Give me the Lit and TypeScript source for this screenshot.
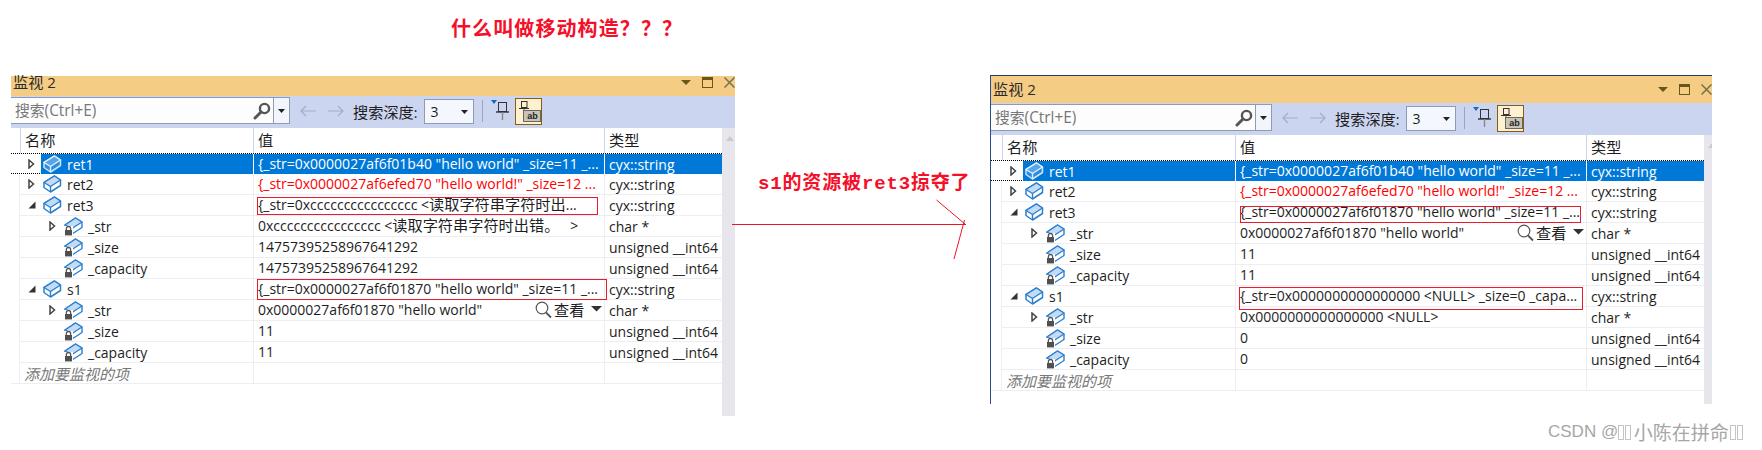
import { LitElement, html, css, svg } from "lit";
import { customElement, property } from "lit/decorators.js";

type Box = { left: number; top: number; width: number; height: number };
type Row = {
  name: string;
  level: number;
  exp?: "open" | "closed";
  value: unknown;
  type: string;
  sel?: boolean;
  red?: boolean;
  box?: Box;
  view?: boolean;
};

const boxIcon = (sel: boolean) => svg`
  <path d="M1 7.5 L11.5 1 L17.5 5 V10.5 L7.5 17 L1 12.5 Z" fill="${sel ? "#2b8be0" : "#fff"}" stroke="${sel ? "#cfe4f8" : "#2a7fd0"}" stroke-width="1.5" stroke-linejoin="round"/>
  <path d="M1 7.5 L11.5 1 L17.5 5 L7.5 11.5 Z" fill="${sel ? "#5aa5e8" : "#c3dbf4"}" stroke="${sel ? "#e4f0fb" : "#2a7fd0"}" stroke-width="1.4" stroke-linejoin="round"/>
  <path d="M7.5 11.5 V17" stroke="${sel ? "#e4f0fb" : "#2a7fd0"}" stroke-width="1.4"/>
`;

const objectIcon = (sel: boolean) => html`<svg class="ico" width="19" height="18" viewBox="0 0 19 18">${boxIcon(sel)}</svg>`;

const memberIcon = html`<svg class="ico" width="19" height="19" viewBox="0 0 19 19">
  <path d="M1 8 L11.5 1 L18 5 V10.5 L8 17 L1 13 Z" fill="#fff" stroke="#2a7fd0" stroke-width="1.4" stroke-linejoin="round"/>
  <path d="M1 8 L11.5 1 L18 5 L8 11.5 Z" fill="#c3dbf4" stroke="#2a7fd0" stroke-width="1.3" stroke-linejoin="round"/>
  <rect x="0" y="9" width="9" height="10" fill="#fff"/>
  <path d="M2.4 13 V11.6 A2.1 2.1 0 0 1 6.6 11.6 V13" fill="none" stroke="#555" stroke-width="1.3"/>
  <rect x="1" y="13" width="7" height="5.4" fill="#505050"/>
</svg>`;

const closedArrow = html`<svg class="arrow" width="7" height="10" viewBox="0 0 7 10"><path d="M1 1 L5.5 5 L1 9 Z" fill="#fff" stroke="#444" stroke-width="1.5"/></svg>`;
const openArrow = html`<svg class="arrow" width="8" height="8" viewBox="0 0 8 8"><path d="M0.5 7.5 H7.5 V0.5 Z" fill="#333"/></svg>`;

const viewer = html`<span class="viewer">
  <svg width="17" height="18" viewBox="0 0 17 18"><circle cx="7" cy="7" r="5.8" fill="#fff" stroke="#555" stroke-width="1.2"/><path d="M11 11.5 L16 16.5" stroke="#555" stroke-width="1.8"/></svg>
  <span class="cjk">查看</span>
  <svg class="vdown" width="11" height="6" viewBox="0 0 11 6"><path d="M0 0 H11 L5.5 5.5 Z" fill="#333"/></svg>
</span>`;

@customElement("watch-panel")
class WatchPanel extends LitElement {
  @property({ type: Array }) rows: Row[] = [];
  @property({ type: Number }) searchWidth = 279;
  @property({ type: Number }) gutter = 9;
  @property({ type: Number }) titleHeight = 20;
  @property({ type: Number }) scrollWidth2 = 13;
  @property({ type: Boolean, reflect: true }) framed = false;

  static styles = css`
    :host {
      display: flex;
      flex-direction: column;
      box-sizing: border-box;
      color: #1e1e1e;
      font: 14px "Open Sans", "Noto Sans CJK SC", sans-serif;
    }
    :host([framed]) {
      border-top: 1px solid #1f3a78;
      border-left: 1px solid #2b4a94;
      overflow: hidden;
    }
    .cjk { font-size: 15.2px; font-family: "Noto Sans CJK SC", sans-serif; line-height: 1; }
    .title {
      flex: none;
      display: flex;
      align-items: flex-end;
      background: #f5cc84;
      box-sizing: border-box;
      padding: 0 0 6px 2px;
      font-size: 15px;
      line-height: 15px;
      color: #2b2b2b;
    }
    .title-icons {
      margin-left: auto;
      display: flex;
      align-items: center;
      flex: none;
      width: 54px;
      gap: 11px;
      height: 12px;
      margin-bottom: 2px;
    }
    .toolbar {
      flex: none;
      height: 32px;
      display: flex;
      background: #ccd5f0;
      align-items: flex-start;
    }
    .search {
      flex: none;
      box-sizing: border-box;
      height: 27px;
      margin-top: 1px;
      background: #fdfdfe;
      border-top: 1px solid #8f9ab3;
      border-bottom: 1px solid #8f9ab3;
      border-right: 1px solid #8f9ab3;
      display: flex;
      align-items: center;
      color: #777;
      padding-left: 4px;
    }
    .search .q { flex: 1; display: flex; align-items: center; font-size: 15.4px; }
    .search svg.glass { margin-right: 2px; }
    .search .drop {
      width: 15px;
      align-self: stretch;
      border-left: 1px solid #8f9ab3;
      background: #f3f5fc;
      display: flex;
      align-items: center;
      justify-content: center;
    }
    .nav { display: flex; gap: 12px; margin: 9px 0 0 10px; }
    .depth { margin: 6px 0 0 9px; color: #1e1e1e; display: flex; align-items: center; height: 20px; }
    .combo {
      box-sizing: border-box;
      width: 50px;
      height: 25px;
      margin: 3px 0 0 7px;
      background: #f5f7fe;
      border: 1px solid #8f9ab3;
      display: flex;
      align-items: center;
      justify-content: space-between;
      padding: 0 5px 0 5px;
      font-size: 14px;
      color: #1e1e1e;
    }
    .sep { width: 1px; height: 22px; background: #9aa6bf; margin: 4px 0 0 8px; }
    .pin { margin: 4px 0 0 8px; }
    .toggle {
      box-sizing: border-box;
      width: 27px;
      height: 27px;
      margin: 2px 0 0 5px;
      background: #fff0d0;
      border: 1px solid #8a5c10;
      position: relative;
    }
    .toggle .ab {
      position: absolute;
      left: 7px;
      top: 11px;
      width: 18px;
      height: 12px;
      box-sizing: border-box;
      background: #c8c4b8;
      border: 1px solid #666;
      font: bold 9px/10px "Liberation Sans", sans-serif;
      text-align: center;
      color: #222;
    }
    .toggle svg { position: absolute; left: 2px; top: 0; }
    .body { flex: 1; display: flex; min-height: 0; background: #fff; }
    .list { flex: 1; min-width: 0; }
    .scroll { flex: none; background: #e6e6ec; position: relative; }
    .scroll svg { position: absolute; left: 4px; top: 8px; }
    .grid {
      display: grid;
      grid-template-columns: var(--g) 233px 351px 1fr;
      box-sizing: border-box;
    }
    .head { height: 25px; }
    .head > div { display: flex; align-items: center; padding: 0 0 2px 4px; box-sizing: border-box; }
    .head .col { border-left: 1px solid #ccd5f0; }
    .head > div.g { padding: 0; }
    .row { height: 21px; }
    .row > div {
      box-sizing: border-box;
      border-bottom: 1px solid #eeeef2;
      display: flex;
      align-items: center;
      white-space: nowrap;
      min-width: 0;
    }
    .row > div.g { border-bottom-color: transparent; }
    .row.last > div.g { border-bottom-color: #eeeef2; }
    .row .name { border-left: 1px solid #eeeef2; margin-left: -1px; }
    .row .value, .row .type { border-left: 1px solid #eeeef2; padding-left: 4px; }
    .row .value { position: relative; }
    .txt { flex: 1; white-space: pre; line-height: 20px; }
    .exp { flex: none; width: 21px; display: flex; justify-content: flex-start; padding-left: 8px; box-sizing: border-box; }
    .label { flex: 1; align-self: stretch; display: flex; align-items: center; padding-left: 2px; gap: 5px; }
    .ico { flex: none; }
    .row.sel { border-top: 1px dotted #000; border-bottom: 1px dotted #000; }
    .row.sel > div { border-bottom: 0; }
    .row.sel .name { border-left-color: transparent; }
    .row.sel .label, .row.sel .value, .row.sel .type { background: #0078d7; color: #fff; }
    .row.sel .value, .row.sel .type { border-left-color: #fff; }
    .red { color: #f00; }
    .add { color: #777; font-style: italic; padding-left: 4px; font-size: 15px; }
    .viewer { position: absolute; left: 281px; top: 0; height: 20px; display: flex; align-items: center; background: #fff; }
    .viewer .cjk { margin-left: 2px; }
    .vdown { margin-left: 7px; margin-top: -3px; }
    .redbox { position: absolute; box-sizing: border-box; border: 1px solid #e81c2c; pointer-events: none; }
  `;

  private renderRow(r: Row) {
    const ind = r.level * 21;
    return html`<div class="grid row ${r.sel ? "sel" : ""}">
      <div class="g"></div>
      <div class="name">
        <span style="flex:none;width:${ind}px"></span>
        <span class="exp">${r.exp === "open" ? openArrow : r.exp === "closed" ? closedArrow : ""}</span>
        <span class="label">${r.level === 0 ? objectIcon(!!r.sel) : memberIcon}<span>${r.name}</span></span>
      </div>
      <div class="value">
        <span class="txt ${r.red ? "red" : ""}">${r.value}</span>
        ${r.view ? viewer : ""}
        ${r.box
          ? html`<span class="redbox" style="left:${r.box.left}px;top:${r.box.top}px;width:${r.box.width}px;height:${r.box.height}px"></span>`
          : ""}
      </div>
      <div class="type">${r.type}</div>
    </div>`;
  }

  render() {
    return html`
      <div class="title" style="height:${this.titleHeight}px">
        <span><span class="cjk">监视</span> 2</span>
        <span class="title-icons">
          <svg width="10" height="5" viewBox="0 0 10 5"><path d="M0 0 H10 L5 5 Z" fill="#6b5518"/></svg>
          <svg width="11" height="11" viewBox="0 0 11 11"><rect x="0.5" y="0.5" width="10" height="10" fill="none" stroke="#6b5518"/><rect x="0" y="0" width="11" height="3" fill="#6b5518"/></svg>
          <svg width="11" height="11" viewBox="0 0 11 11"><path d="M0.5 0.5 L10.5 10.5 M10.5 0.5 L0.5 10.5" stroke="#75704f" stroke-width="1.5"/></svg>
        </span>
      </div>
      <div class="toolbar">
        <div class="search" style="width:${this.searchWidth}px">
          <span class="q"><span class="cjk" style="font-size:14.8px">搜索</span>(Ctrl+E)</span>
          <svg class="glass" width="18" height="18" viewBox="0 0 18 18"><circle cx="11.5" cy="6.5" r="4.6" fill="none" stroke="#555" stroke-width="2.4"/><path d="M8 10 L2 16" stroke="#555" stroke-width="3" stroke-linecap="round"/></svg>
          <span class="drop"><svg width="7" height="4" viewBox="0 0 7 4"><path d="M0 0 H7 L3.5 4 Z" fill="#222"/></svg></span>
        </div>
        <div class="nav">
          <svg width="16" height="12" viewBox="0 0 16 12"><path d="M16 6 H1 M6 1 L1 6 L6 11" fill="none" stroke="#a4adc6" stroke-width="1.2"/></svg>
          <svg width="16" height="12" viewBox="0 0 16 12"><path d="M0 6 H15 M10 1 L15 6 L10 11" fill="none" stroke="#a4adc6" stroke-width="1.2"/></svg>
        </div>
        <div class="depth"><span class="cjk">搜索深度</span>:</div>
        <div class="combo"><span>3</span><svg width="7" height="4" viewBox="0 0 7 4"><path d="M0 0 H7 L3.5 4 Z" fill="#222"/></svg></div>
        <div class="sep"></div>
        <svg class="pin" width="19" height="21" viewBox="0 0 19 21">
          <path d="M0 0 H6 L3 4 Z" fill="#1c6ab0"/>
          <rect x="7.5" y="2.5" width="8" height="9" fill="none" stroke="#333"/>
          <path d="M5 12 H18" stroke="#333" stroke-width="1.4"/>
          <path d="M11.5 12 V20" stroke="#888" stroke-width="1.4"/>
        </svg>
        <div class="toggle">
          <svg width="12" height="18" viewBox="0 0 12 18"><rect x="3.5" y="2.5" width="5.5" height="6" fill="none" stroke="#333"/><path d="M1 9.5 H11" stroke="#333"/><path d="M6 10 V16" stroke="#666"/></svg>
          <span class="ab">ab</span>
        </div>
      </div>
      <div class="body" style="--g:${this.gutter}px">
        <div class="list">
          <div class="grid head">
            <div class="g"></div>
            <div class="col"><span class="cjk">名称</span></div>
            <div class="col"><span class="cjk">值</span></div>
            <div class="col"><span class="cjk">类型</span></div>
          </div>
          ${this.rows.map((r) => this.renderRow(r))}
          <div class="grid row last">
            <div class="g"></div>
            <div class="name"><span class="add cjk">添加要监视的项</span></div>
            <div class="value"></div>
            <div class="type"></div>
          </div>
        </div>
        <div class="scroll" style="width:${this.scrollWidth2}px">
          <svg width="8" height="5" viewBox="0 0 8 5"><path d="M0 5 L4 0 L8 5 Z" fill="#c9c9d0"/></svg>
        </div>
      </div>
    `;
  }
}

const cjk = (s: string) => html`<span class="cjk">${s}</span>`;

const leftRows: Row[] = [
  { name: "ret1", level: 0, exp: "closed", sel: true, type: "cyx::string", value: `{_str=0x0000027af6f01b40 "hello world" _size=11 _...` },
  { name: "ret2", level: 0, exp: "closed", red: true, type: "cyx::string", value: `{_str=0x0000027af6efed70 "hello world!" _size=12 ...` },
  { name: "ret3", level: 0, exp: "open", type: "cyx::string", value: html`{_str=0xcccccccccccccccc &lt;${cjk("读取字符串字符时出")}...`, box: { left: 3, top: 2, width: 341, height: 18 } },
  { name: "_str", level: 1, exp: "closed", type: "char *", value: html`0xcccccccccccccccc &lt;${cjk("读取字符串字符时出错。")}   &gt;` },
  { name: "_size", level: 1, type: "unsigned __int64", value: "14757395258967641292" },
  { name: "_capacity", level: 1, type: "unsigned __int64", value: "14757395258967641292" },
  { name: "s1", level: 0, exp: "open", type: "cyx::string", value: `{_str=0x0000027af6f01870 "hello world" _size=11 _...`, box: { left: 3, top: 0, width: 350, height: 21 } },
  { name: "_str", level: 1, exp: "closed", type: "char *", value: `0x0000027af6f01870 "hello world"`, view: true },
  { name: "_size", level: 1, type: "unsigned __int64", value: "11" },
  { name: "_capacity", level: 1, type: "unsigned __int64", value: "11" },
];

const rightRows: Row[] = [
  { name: "ret1", level: 0, exp: "closed", sel: true, type: "cyx::string", value: `{_str=0x0000027af6f01b40 "hello world" _size=11 _...` },
  { name: "ret2", level: 0, exp: "closed", red: true, type: "cyx::string", value: `{_str=0x0000027af6efed70 "hello world!" _size=12 ...` },
  { name: "ret3", level: 0, exp: "open", type: "cyx::string", value: `{_str=0x0000027af6f01870 "hello world" _size=11 _...`, box: { left: 4, top: 4, width: 341, height: 17 } },
  { name: "_str", level: 1, exp: "closed", type: "char *", value: `0x0000027af6f01870 "hello world"`, view: true },
  { name: "_size", level: 1, type: "unsigned __int64", value: "11" },
  { name: "_capacity", level: 1, type: "unsigned __int64", value: "11" },
  { name: "s1", level: 0, exp: "open", type: "cyx::string", value: `{_str=0x0000000000000000 <NULL> _size=0 _capa...`, box: { left: 3, top: 1, width: 344, height: 23 } },
  { name: "_str", level: 1, exp: "closed", type: "char *", value: `0x0000000000000000 <NULL>` },
  { name: "_size", level: 1, type: "unsigned __int64", value: "0" },
  { name: "_capacity", level: 1, type: "unsigned __int64", value: "0" },
];

@customElement("app-root")
class AppRoot extends LitElement {
  static styles = css`
    :host {
      display: block;
      position: relative;
      width: 1762px;
      height: 450px;
      overflow: hidden;
      background: #fff;
    }
    .win { position: absolute; }
    .win.a { left: 11px; top: 76px; width: 724px; height: 340px; }
    .win.b { left: 990px; top: 75px; width: 722px; height: 329px; }
    .note {
      position: absolute;
      color: #f5102a;
      font-weight: 700;
      white-space: nowrap;
      font-family: "Liberation Mono", "Noto Sans CJK SC", sans-serif;
    }
    .n1 { left: 451px; top: 17px; font-size: 20px; line-height: 28px; letter-spacing: 1.1px; }
    .n2 { left: 758px; top: 170px; font-size: 19px; line-height: 28px; letter-spacing: 0.85px; }
    .arrow { position: absolute; left: 730px; top: 198px; }
    .mark {
      position: absolute;
      left: 1548px;
      top: 419px;
      color: #a6a6a6;
      white-space: nowrap;
      display: flex;
      align-items: center;
      font: 17px/26px "Liberation Sans", "Noto Sans CJK SC", sans-serif;
    }
    .mark .zh { font-size: 19px; font-family: "Noto Sans CJK SC", sans-serif; margin: 0 1.5px; }
    .tofu { display: inline-block; width: 4px; height: 13px; border: 1px solid #c4c4c4; margin-right: 1px; }
  `;
  render() {
    return html`
      <div class="note n1">什么叫做移动构造？？？</div>
      <watch-panel class="win a" .rows=${leftRows} .searchWidth=${279} .gutter=${9} .titleHeight=${20} .scrollWidth2=${13}></watch-panel>
      <div class="note n2">s1的资源被ret3掠夺了</div>
      <svg class="arrow" width="240" height="65" viewBox="0 0 240 65">
        <path d="M2 26.5 H236 M206.5 2 L235 26 M224 61 L234.5 22" fill="none" stroke="#f0142a" stroke-width="1"/>
      </svg>
      <watch-panel class="win b" framed .rows=${rightRows} .searchWidth=${281} .gutter=${11} .titleHeight=${27} .scrollWidth2=${8}></watch-panel>
      <div class="mark">CSDN @<span class="tofu"></span><span class="tofu"></span><span class="zh">小陈在拼命</span><span class="tofu"></span><span class="tofu"></span></div>
    `;
  }
}
